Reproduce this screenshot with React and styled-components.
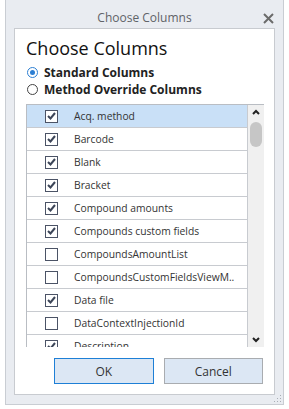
import React, { useState } from "react";
import styled, { createGlobalStyle } from "styled-components";

const GlobalStyle = createGlobalStyle`
  body {
    margin: 0;
    background: #ffffff;
    font-family: "Open Sans", "Noto Sans", sans-serif;
  }
`;

const columns = [
  { name: "Acq. method", checked: true },
  { name: "Barcode", checked: true },
  { name: "Blank", checked: true },
  { name: "Bracket", checked: true },
  { name: "Compound amounts", checked: true },
  { name: "Compounds custom fields", checked: true },
  { name: "CompoundsAmountList", checked: false },
  { name: "CompoundsCustomFieldsViewM..", checked: false },
  { name: "Data file", checked: true },
  { name: "DataContextInjectionId", checked: false },
  { name: "Description", checked: true },
];

export default function App() {
  const [mode, setMode] = useState("standard");
  const [items, setItems] = useState(columns);

  const toggle = (i) => {
    setItems(items.map((it, k) => (k === i ? { ...it, checked: !it.checked } : it)));
  };

  return (
    <>
      <GlobalStyle />
      <Window>
        <TitleBar>
          <TitleText>Choose Columns</TitleText>
          <CloseButton>
            <svg width="11" height="11" viewBox="0 0 11 11">
              <path d="M1 1 L10 10 M10 1 L1 10" stroke="#6b6b6b" strokeWidth="2" />
            </svg>
          </CloseButton>
        </TitleBar>
        <Panel>
          <Heading>Choose Columns</Heading>
          <RadioGroup>
            <RadioRow onClick={() => setMode("standard")}>
              <Radio selected={mode === "standard"} />
              <RadioLabel>Standard Columns</RadioLabel>
            </RadioRow>
            <RadioRow onClick={() => setMode("override")}>
              <Radio selected={mode === "override"} />
              <RadioLabel>Method Override Columns</RadioLabel>
            </RadioRow>
          </RadioGroup>
          <ListBox>
            <Rows>
              {items.map((it, i) => (
                <Row key={it.name} selected={i === 0} onClick={() => toggle(i)}>
                  <CheckCell>
                    <Check>
                      {it.checked && (
                        <svg width="9" height="8" viewBox="0 0 9 8">
                          <path d="M1 4 L3.5 6.5 L8 1" stroke="#3c4558" strokeWidth="2" fill="none" />
                        </svg>
                      )}
                    </Check>
                  </CheckCell>
                  <RowText>{it.name}</RowText>
                </Row>
              ))}
            </Rows>
            <ScrollBar>
              <Arrow>
                <svg width="8" height="6" viewBox="0 0 8 6">
                  <path d="M1 5 L4 2 L7 5" stroke="#222" strokeWidth="2" fill="none" />
                </svg>
              </Arrow>
              <Track>
                <Thumb />
              </Track>
              <Arrow>
                <svg width="8" height="6" viewBox="0 0 8 6">
                  <path d="M1 1 L4 4 L7 1" stroke="#222" strokeWidth="2" fill="none" />
                </svg>
              </Arrow>
            </ScrollBar>
          </ListBox>
          <Buttons>
            <Button focused>OK</Button>
            <Button>Cancel</Button>
          </Buttons>
        </Panel>
        <Grip>
          <svg width="8" height="8" viewBox="0 0 8 8">
            {[[6, 0], [6, 3], [3, 3], [6, 6], [3, 6], [0, 6]].map(([x, y]) => (
              <rect key={x + "-" + y} x={x} y={y} width="1" height="1" fill="#a8adb5" />
            ))}
          </svg>
        </Grip>
      </Window>
    </>
  );
}

const Window = styled.div`
  position: relative;
  margin-left: 5px;
  width: 277px;
  height: 404px;
  background: #e9ecf1;
  border: 1px solid #c9cdd3;
  border-top: none;
  display: flex;
  flex-direction: column;
`;

const TitleBar = styled.div`
  height: 28px;
  display: flex;
  align-items: center;
  justify-content: center;
  position: relative;
`;

const TitleText = styled.span`
  font-size: 12px;
  color: #5f6368;
  margin-top: 6px;
`;

const CloseButton = styled.div`
  position: absolute;
  right: 9px;
  top: 13px;
  width: 11px;
  height: 11px;
  display: flex;
`;

const Panel = styled.div`
  margin: 0 8px;
  height: 367px;
  background: #ffffff;
  border: 1px solid #c8cbd0;
  box-sizing: border-box;
  padding: 6px 11px 0 11px;
  display: flex;
  flex-direction: column;
`;

const Heading = styled.div`
  font-size: 18px;
  color: #111;
  line-height: 26px;
  height: 28px;
`;

const RadioGroup = styled.div`
  display: flex;
  flex-direction: column;
  margin-top: 1px;
  margin-left: 1px;
`;

const RadioRow = styled.div`
  display: flex;
  align-items: center;
  height: 17px;
  cursor: pointer;
`;

const Radio = styled.span`
  width: 11px;
  height: 11px;
  border-radius: 50%;
  border: 1px solid ${(p) => (p.selected ? "#2d7fd3" : "#444")};
  box-sizing: border-box;
  display: flex;
  align-items: center;
  justify-content: center;
  margin-right: 6px;
  &::after {
    content: "";
    width: 5px;
    height: 5px;
    border-radius: 50%;
    background: ${(p) => (p.selected ? "#2d7fd3" : "transparent")};
  }
`;

const RadioLabel = styled.span`
  font-size: 12px;
  font-weight: bold;
  color: #222;
`;

const ListBox = styled.div`
  margin-top: 6px;
  width: 237px;
  height: 242px;
  border: 1px solid #b9bdc3;
  border-right: none;
  border-bottom: none;
  display: flex;
  overflow: hidden;
`;

const Rows = styled.div`
  width: 220px;
  display: flex;
  flex-direction: column;
  border-right: 1px solid #c8cbd0;
`;

const Row = styled.div`
  height: 23px;
  flex-shrink: 0;
  box-sizing: border-box;
  display: flex;
  align-items: center;
  background: ${(p) => (p.selected ? "#c9e0f7" : "#fff")};
  border-bottom: 1px solid #c8cbd0;
  cursor: pointer;
`;

const CheckCell = styled.div`
  width: 46px;
  display: flex;
  justify-content: center;
  padding-left: 1px;
`;

const Check = styled.span`
  width: 13px;
  height: 13px;
  box-sizing: border-box;
  border: 1px solid #4b5366;
  background: #fff;
  display: flex;
  align-items: center;
  justify-content: center;
`;

const RowText = styled.span`
  font-size: 10.3px;
  color: #333;
  white-space: nowrap;
`;

const ScrollBar = styled.div`
  width: 16px;
  background: #f0f0f0;
  display: flex;
  flex-direction: column;
`;

const Arrow = styled.div`
  height: 14px;
  display: flex;
  align-items: center;
  justify-content: center;
`;

const Track = styled.div`
  flex: 1;
  display: flex;
  justify-content: center;
  padding-top: 3px;
`;

const Thumb = styled.div`
  width: 12px;
  height: 25px;
  border-radius: 6px;
  background: #c6c6c6;
`;

const Buttons = styled.div`
  display: flex;
  gap: 10px;
  margin-top: 11px;
  margin-left: 28px;
`;

const Button = styled.button`
  width: 100px;
  height: 26px;
  box-sizing: border-box;
  background: #dce7f4;
  border: 1px solid ${(p) => (p.focused ? "#1e7fd6" : "#a9acb0")};
  font-family: "Open Sans", "Noto Sans", sans-serif;
  font-size: 12px;
  color: #333;
  padding: 0;
`;

const Grip = styled.div`
  position: absolute;
  right: 1px;
  bottom: 1px;
  width: 8px;
  height: 8px;
  display: flex;
`;
